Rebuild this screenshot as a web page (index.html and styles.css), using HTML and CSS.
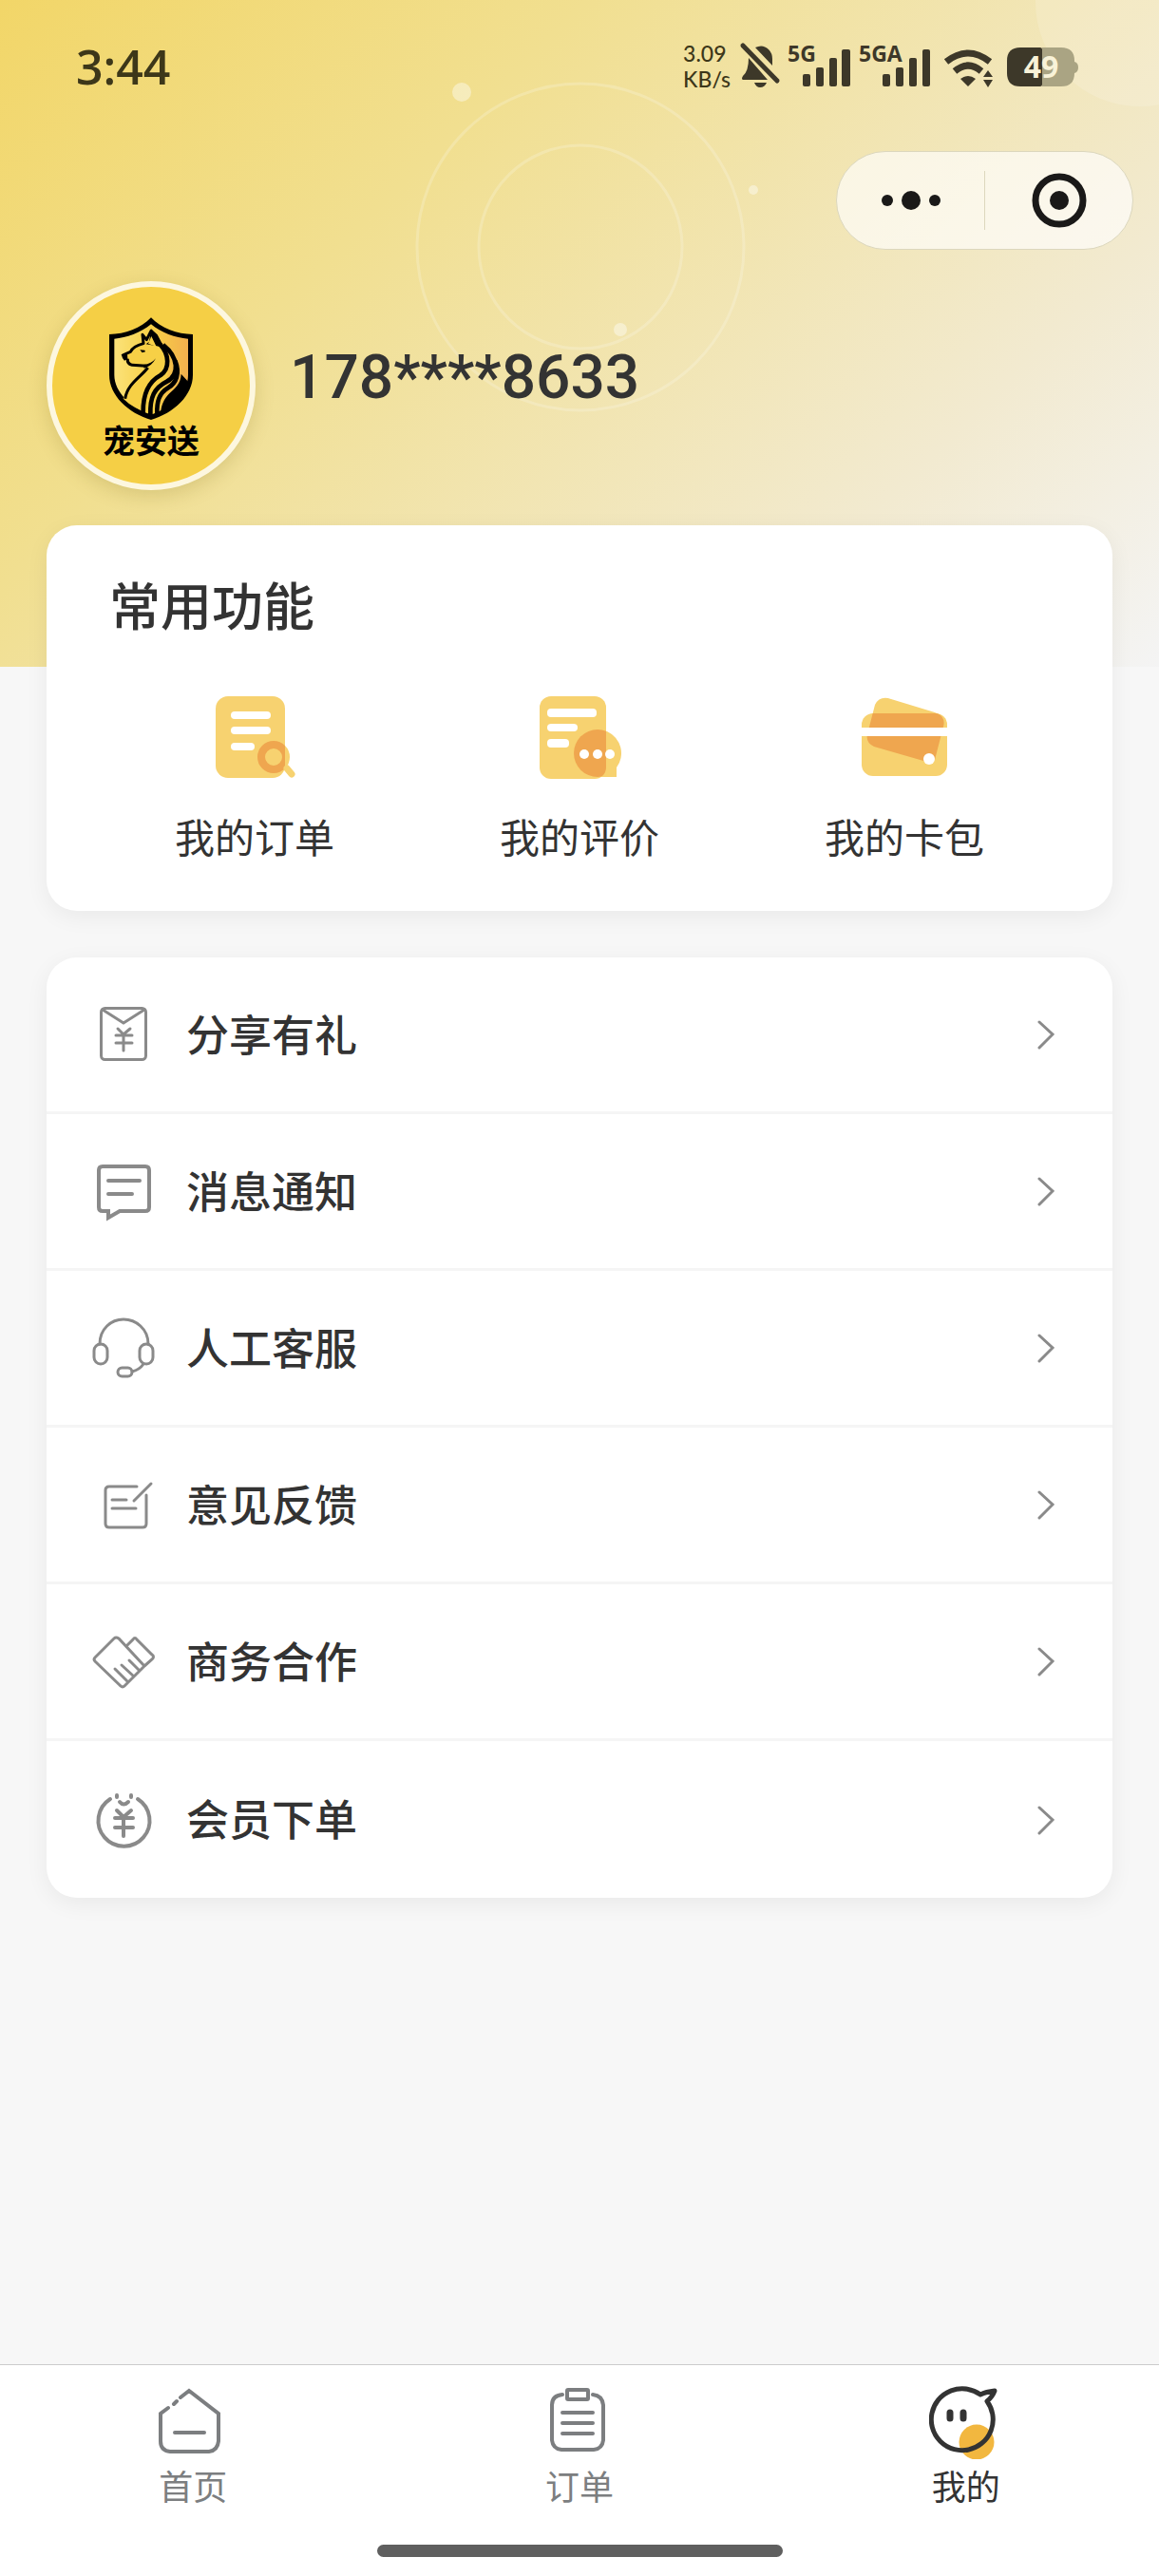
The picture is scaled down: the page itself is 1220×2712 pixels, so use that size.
FILE: index.html
```html
<!DOCTYPE html>
<html lang="zh-CN">
<head>
  <meta charset="UTF-8" />
  <meta name="viewport" content="width=device-width, initial-scale=1.0" />
  <title>我的 - 宠安送</title>
  <link rel="stylesheet" href="styles.css">
</head>
<body>
  <!-- Header background -->
  <div class="hero-bg">
    <svg viewBox="0 0 1220 702" preserveAspectRatio="xMidYMin slice" aria-hidden="true">
      <g fill="none" stroke="#fff" stroke-opacity=".2" stroke-width="3"><circle cx="611" cy="260" r="172"/><circle cx="611" cy="260" r="107"/></g>
      <g fill="#fff" fill-opacity=".4"><circle cx="486" cy="97" r="10"/><circle cx="793" cy="200" r="5"/><circle cx="653" cy="347" r="7"/></g>
      <circle cx="1200" cy="2" r="110" fill="#fff" fill-opacity=".15"/>
    </svg>
  </div>

  <header class="status-bar">
    <time class="clock">3:44</time>
    <div class="status-icons">
      <div class="net-speed"><span>3.09</span><span>KB/s</span></div>
      <svg width="44" height="48" viewBox="0 0 44 48">
        <path d="M18 4Q26 0 32 6Q36 10 36 16V23ZM11 15L31 38H5Q3 37 5 34Q11 29 11 15ZM17 41H30Q28 46 23 46Q19 46 17 41Z"/>
        <path class="slash" d="M5 2L41 39"/>
      </svg>
      <svg width="67" height="48" viewBox="0 0 67 48">
        <text x="0" y="19">5G</text>
        <rect x="16" y="32" width="8" height="13" rx="2"/><rect x="30" y="25" width="8" height="20" rx="2"/><rect x="44" y="15" width="8" height="30" rx="2"/><rect x="57" y="6" width="9" height="39" rx="2"/>
      </svg>
      <svg width="78" height="48" viewBox="0 0 78 48">
        <text x="0" y="19">5GA</text>
        <rect x="25" y="32" width="8" height="13" rx="2"/><rect x="39" y="25" width="8" height="20" rx="2"/><rect x="53" y="15" width="8" height="30" rx="2"/><rect x="67" y="6" width="8" height="39" rx="2"/>
      </svg>
      <svg width="62" height="48" viewBox="0 0 62 48">
        <path class="wave" d="M6 19Q29 1 52 19M15 29Q29 17 43 29"/>
        <path d="M21 37Q29 31 37 37L29 45ZM45 35L50 28L55 35ZM45 38H55L50 46Z"/>
      </svg>
      <svg class="battery" width="75" height="48" viewBox="0 0 75 48">
        <path class="battery-rest" d="M37 4H57Q71 4 71 18V19Q75 20 75 25Q75 30 71 31Q71 45 57 45H37Z"/>
        <path d="M14 4H35Q37 4 37 6V43Q37 45 35 45H14Q0 45 0 31V18Q0 4 14 4Z"/>
        <text x="36" y="36" text-anchor="middle">49</text>
      </svg>
    </div>
  </header>

  <div class="capsule">
    <button aria-label="更多">
      <svg width="62" height="58" viewBox="0 0 62 58"><circle cx="6" cy="29" r="6"/><circle cx="31" cy="29" r="10"/><circle cx="56" cy="29" r="6"/></svg>
    </button>
    <button aria-label="关闭">
      <svg width="58" height="58" viewBox="0 0 58 58"><circle class="ring" cx="29" cy="29" r="25"/><circle cx="29" cy="29" r="10"/></svg>
    </button>
  </div>

  <main>
    <section class="profile">
      <div class="avatar">
        <svg width="92" height="110" viewBox="70 40 276 330" aria-hidden="true">
          <defs>
            <linearGradient id="shield" x1="0" y1="0" x2="1" y2="0"><stop offset="0" stop-color="#fbe27a"/><stop offset=".5" stop-color="#f7d046"/><stop offset="1" stop-color="#f3b04e"/></linearGradient>
          </defs>
          <path d="M208 44C240 78 290 97 340 97V225C340 290 280 345 208 367C136 345 76 290 76 225V97C126 97 176 78 208 44Z"/>
          <path fill="url(#shield)" d="M208 65C240 92 285 108 325 111V225C325 280 275 328 208 350C145 328 92 280 92 225V111C130 108 176 92 208 65Z"/>
          <path fill="#f7d046" d="M120 300C132 252 178 230 196 199L148 193L136 178L118 168L143 152Q152 134 184 124L180 100L194 114L208 86L235 130C275 170 262 210 255 248L222 345L208 350Q150 330 120 300Z"/>
          <g class="dog">
            <path d="M118 163L143 152Q152 134 184 126L181 98L194 114L208 86L238 132"/>
            <path d="M134 174Q132 190 148 194L192 197"/>
            <path d="M126 300C134 252 176 232 198 202"/>
          </g>
          <path d="M114 160L133 160L134 175L124 180Q117 174 114 160ZM173 146L188 147L190 152L180 155ZM186 204Q210 198 223 173Q210 190 184 193ZM208 80L202 120L192 128L226 134L250 140L228 98Z"/>
          <path fill="#f7d046" d="M209 103L225 136L199 126Z"/>
          <g class="mane">
            <path d="M236 128C266 160 268 206 238 226C205 244 182 276 183 343"/>
            <path d="M246 130C296 170 298 224 258 246C218 266 204 296 206 352"/>
            <path d="M284 180C300 220 288 250 262 266C232 284 226 310 227 348"/>
          </g>
          <path d="M303 222L325 246Q322 320 238 348C244 270 300 282 303 222Z"/>
        </svg>
        <span>宠安送</span>
      </div>
      <h1>178****8633</h1>
    </section>

    <section class="card features">
      <h2>常用功能</h2>
      <div class="feature-grid">
        <a href="#orders">
          <svg viewBox="0 0 96 96" aria-hidden="true">
            <defs><clipPath id="doc1"><rect x="7" y="5" width="73" height="86" rx="13"/></clipPath></defs>
            <rect x="7" y="5" width="73" height="86" rx="13" fill="#f7d270"/>
            <g fill="#fff"><rect x="23" y="21" width="42" height="8" rx="4"/><rect x="23" y="37" width="42" height="8" rx="4"/><rect x="23" y="54" width="25" height="8" rx="4"/></g>
            <circle cx="68" cy="69" r="13" fill="none" stroke="#f7d270" stroke-width="8"/>
            <circle cx="68" cy="69" r="13" fill="none" stroke="#efa64f" stroke-width="8" clip-path="url(#doc1)"/>
            <path d="M82 81L87 87" stroke="#f7d270" stroke-width="7" stroke-linecap="round"/>
          </svg>
          我的订单
        </a>
        <a href="#reviews">
          <svg viewBox="0 0 96 96" aria-hidden="true">
            <defs><clipPath id="doc2"><rect x="6" y="5" width="70" height="87" rx="12"/></clipPath></defs>
            <rect x="6" y="5" width="70" height="87" rx="12" fill="#f7d270"/>
            <g fill="#fff"><rect x="14" y="18" width="52" height="9" rx="4"/><rect x="14" y="34" width="32" height="8" rx="4"/><rect x="14" y="50" width="23" height="9" rx="4"/></g>
            <path d="M67 90A25 25 0 1 1 87 80V90Z" fill="#f7d270"/>
            <circle cx="67" cy="65" r="25" fill="#efa64f" clip-path="url(#doc2)"/>
            <g fill="#fff"><circle cx="53" cy="66" r="5"/><circle cx="67" cy="66" r="5"/><circle cx="80" cy="66" r="5"/></g>
          </svg>
          我的评价
        </a>
        <a href="#cards">
          <svg viewBox="0 0 96 96" aria-hidden="true">
            <defs><clipPath id="wallet"><rect x="3" y="23" width="90" height="66" rx="12"/></clipPath></defs>
            <path d="M34 8L80 22Q92 26 89 37L80 72Q76 76 68 73L16 58Q7 54 9 45L17 14Q22 4 34 8Z" fill="#f7d270"/>
            <rect x="3" y="23" width="90" height="66" rx="12" fill="#f7d270"/>
            <path d="M34 8L80 22Q92 26 89 37L80 72Q76 76 68 73L16 58Q7 54 9 45L17 14Q22 4 34 8Z" fill="#efa64f" clip-path="url(#wallet)"/>
            <path d="M3 38H93V47H3Z" fill="#fff"/><circle cx="74" cy="71" r="6" fill="#fff"/>
          </svg>
          我的卡包
        </a>
      </div>
    </section>

    <nav class="card menu">
      <a href="#share">
        <svg class="icon" viewBox="0 0 68 68"><rect x="9.5" y="6.5" width="47" height="54" rx="4"/><path d="M11 8L33 22L55 8M27 28L33 34L40 28M33 34V51M25 35H42M25 43H42"/></svg>
        <span>分享有礼</span>
        <svg class="chevron" viewBox="0 0 18 32"><path d="M2 3L16 16L2 30"/></svg>
      </a>
      <a href="#messages">
        <svg class="icon bold" viewBox="0 0 68 68"><path d="M11 8H56Q60 8 60 12V51Q60 55 56 55H29L17 62V55H11Q7 55 7 51V12Q7 8 11 8ZM17 23H50M17 37H42"/></svg>
        <span>消息通知</span>
        <svg class="chevron" viewBox="0 0 18 32"><path d="M2 3L16 16L2 30"/></svg>
      </a>
      <a href="#service">
        <svg class="icon" viewBox="0 0 68 68"><path d="M8 30C8 14 20 4 33 4S59 14 59 30M42 59Q50 57 54 51"/><rect x="2" y="30" width="14" height="21" rx="7"/><rect x="50" y="30" width="14" height="21" rx="7"/><rect x="27" y="55" width="15" height="9" rx="4.5"/></svg>
        <span>人工客服</span>
        <svg class="chevron" viewBox="0 0 18 32"><path d="M2 3L16 16L2 30"/></svg>
      </a>
      <a href="#feedback">
        <svg class="icon" viewBox="0 0 68 68"><path d="M47 15H18Q14 15 14 19V54Q14 58 18 58H53Q57 58 57 54V24M44 30L62 12M21 29H36M21 38H46"/></svg>
        <span>意见反馈</span>
        <svg class="chevron" viewBox="0 0 18 32"><path d="M2 3L16 16L2 30"/></svg>
      </a>
      <a href="#business">
        <svg class="icon" viewBox="0 0 68 68"><path d="M3 30L23 10Q25 8 28 10L55 39L34 60Q32 62 30 60L3 34Q1 32 3 30ZM36 18L43 11Q45 8 47 11L63 27Q66 29 63 32L55 39M39 33L50 44M31 38L44 50M24 42L38 56"/></svg>
        <span>商务合作</span>
        <svg class="chevron" viewBox="0 0 18 32"><path d="M2 3L16 16L2 30"/></svg>
      </a>
      <a href="#member">
        <svg class="icon bold" viewBox="0 0 68 68"><path d="M19 12A27 27 0 1 0 48 12M26 8V10M41 8V10M29 15Q33 20 38 15M26 24L33 31L41 24M33 31V51M24 32H43M24 42H43"/></svg>
        <span>会员下单</span>
        <svg class="chevron" viewBox="0 0 18 32"><path d="M2 3L16 16L2 30"/></svg>
      </a>
    </nav>
  </main>

  <footer class="tab-bar">
    <nav>
      <a href="#home">
        <svg viewBox="0 0 78 78"><path d="M26 13L35 6L66 30V59Q65 69 56 70H15Q5 69 5 59V30L13 24M19 20L22 17M20 50H51"/></svg>
        首页
      </a>
      <a href="#order-list">
        <svg viewBox="0 0 78 78"><path d="M21 10Q10 11 10 21V58Q11 67 20 68H54Q63 67 64 58V21Q63 11 53 10M21 29H53M21 40H53M21 51H53"/><rect x="26" y="5" width="22" height="10" rx="1"/></svg>
        订单
      </a>
      <a href="#mine" class="active" aria-current="page">
        <svg viewBox="0 0 78 78"><circle class="blush" cx="50" cy="60" r="18.5"/><path d="M61 17A32.5 32.5 0 1 1 54 10Q60 7 69 6Q67 12 61 17Z"/><path class="eyes" d="M22 29V35M36 29V35"/></svg>
        我的
      </a>
    </nav>
    <div class="home-indicator"></div>
  </footer>
</body>
</html>
```

FILE: styles.css
```css
* { box-sizing: border-box; }
body {
  margin: 0;
  min-height: 100vh;
  display: flex;
  flex-direction: column;
  position: relative;
  background: #f7f7f7;
  color: #333;
  font-family: "Noto Sans CJK SC", sans-serif;
}
a {
  color: inherit;
  text-decoration: none;
}
svg { display: block; }

.hero-bg {
  position: absolute;
  top: 0;
  left: 0;
  right: 0;
  height: 702px;
  z-index: -1;
  background: linear-gradient(135deg, #f2d668 0%, #f1df90 32%, #f2ead0 76%, #f4f4f4 100%);
}
.hero-bg svg {
  width: 100%;
  height: 100%;
}

/* status bar */
.status-bar {
  height: 140px;
  padding: 0 85px 0 80px;
  display: flex;
  align-items: center;
  justify-content: space-between;
  color: #3d3719;
  font-family: "Open Sans", sans-serif;
}
.clock {
  font-size: 50px;
  font-weight: 600;
}
.status-icons {
  display: flex;
  align-items: center;
  gap: 8px;
  fill: #3d3829;
}
.status-icons svg { overflow: visible; }
.status-icons text {
  font-size: 23px;
  font-weight: 700;
}
.net-speed {
  display: flex;
  flex-direction: column;
  font-family: Lato, sans-serif;
  font-size: 23px;
  font-weight: 500;
  line-height: 27px;
}
.slash {
  stroke: #3d3829;
  stroke-width: 5;
  stroke-linecap: round;
}
.wave {
  fill: none;
  stroke: #3d3829;
  stroke-width: 7;
}
.battery-rest { fill: #aaa483; }
.status-icons .battery text {
  font-size: 32px;
  fill: #f8f2d8;
}

/* mini program capsule */
.capsule {
  align-self: flex-end;
  display: flex;
  align-items: center;
  width: 313px;
  height: 104px;
  margin: 19px 27px 0 0;
  border: 1px solid #dcd7bd;
  border-radius: 52px;
  background: rgba(255, 255, 255, 0.65);
}
.capsule button {
  flex: 1;
  height: 62px;
  padding: 0;
  border: none;
  background: none;
  display: flex;
  align-items: center;
  justify-content: center;
}
.capsule button + button { border-left: 1px solid #dcd7bd; }
.capsule svg { fill: #1a1918; }
.capsule .ring {
  fill: none;
  stroke: #1a1918;
  stroke-width: 7;
}

main { padding: 0 49px; }

.profile {
  display: flex;
  align-items: center;
  gap: 36px;
  margin: 33px 0 37px;
}
.avatar {
  width: 220px;
  height: 220px;
  border: 6px solid #fdf7df;
  border-radius: 50%;
  background: #f5cf45;
  box-shadow: 0 6px 20px rgba(120, 100, 20, 0.2);
  display: flex;
  flex-direction: column;
  align-items: center;
  justify-content: center;
}
.avatar svg { margin-top: 4px; }
.avatar span {
  color: #000;
  font-size: 34px;
  font-weight: 700;
  line-height: 40px;
}
.dog, .mane {
  fill: none;
  stroke: #000;
  stroke-width: 9;
  stroke-linejoin: round;
}
.mane { stroke-width: 14; }
.profile h1 {
  margin: 0 0 16px;
  font-family: Roboto, sans-serif;
  font-size: 64px;
  font-weight: 500;
  line-height: 80px;
}

.card {
  background: #fff;
  border-radius: 32px;
  box-shadow: 0 6px 24px rgba(0, 0, 0, 0.06);
}

.features { padding: 47px 48px 49px; }
.features h2 {
  margin: 0 18px 56px;
  font-size: 54px;
  font-weight: 500;
  line-height: 72px;
}
.feature-grid {
  display: grid;
  grid-template-columns: repeat(3, 1fr);
}
.feature-grid a {
  display: flex;
  flex-direction: column;
  align-items: center;
  gap: 26px;
  font-size: 42px;
  line-height: 60px;
}
.feature-grid svg {
  width: 96px;
  height: 96px;
}

.menu { margin-top: 49px; }
.menu a {
  display: flex;
  align-items: center;
  gap: 31px;
  height: 165px;
  padding: 0 61px 0 48px;
  border-bottom: 3px solid #f5f5f5;
  font-size: 45px;
}
.menu a:last-child { border-bottom: none; }
.menu span {
  flex: 1;
  padding-bottom: 4px;
  font-weight: 500;
}
.icon, .chevron {
  fill: none;
  stroke: #8a8a8a;
  stroke-width: 3;
  stroke-linecap: round;
}
.icon {
  width: 68px;
  height: 68px;
}
.icon.bold { stroke-width: 4; }
.chevron {
  width: 18px;
  height: 32px;
}

/* bottom tabs */
.tab-bar {
  margin-top: auto;
  padding: 21px 0 20px;
  border-top: 1px solid #ccc;
  background: #fff;
}
.tab-bar nav {
  display: grid;
  grid-template-columns: repeat(3, 1fr);
}
.tab-bar a {
  display: flex;
  flex-direction: column;
  align-items: center;
  gap: 3px;
  color: #7c7e80;
  font-size: 36px;
  line-height: 48px;
}
.tab-bar svg {
  width: 78px;
  height: 78px;
  fill: none;
  stroke: currentColor;
  stroke-width: 4;
  stroke-linecap: round;
}
.tab-bar .active { color: #333; }
.active svg {
  stroke-width: 5;
  stroke-linejoin: round;
}
.active .blush {
  fill: #f2b73f;
  stroke: none;
}
.active .eyes { stroke-width: 7; }
.home-indicator {
  width: 35%;
  height: 13px;
  margin: 39px auto 0;
  border-radius: 7px;
  background: #5f5f5f;
}
```
